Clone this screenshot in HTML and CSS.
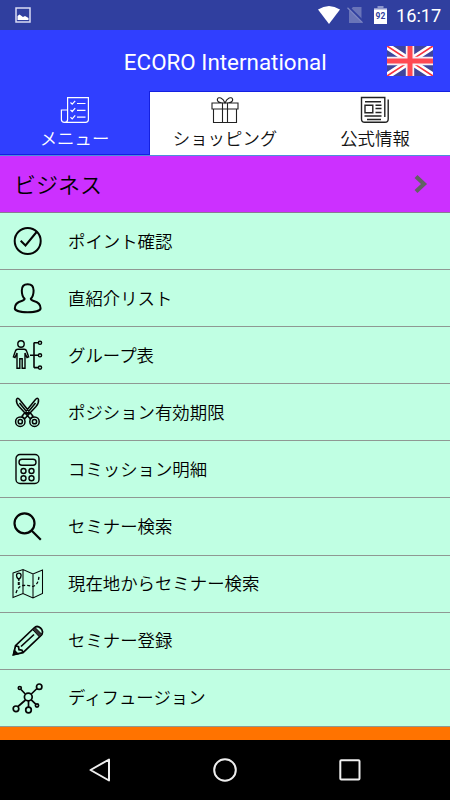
FILE: index.html
```html
<!DOCTYPE html>
<html lang="ja">
<head>
<meta charset="utf-8">
<meta name="viewport" content="width=device-width">
<title>ECORO International</title>
<link rel="stylesheet" href="styles.css">
</head>
<body>
<div class="status">
  <svg class="status-pic" width="16" height="16" viewBox="0 0 16 16"><rect x="1" y="1" width="14" height="14" fill="none" stroke="#d9dcf5" stroke-width="1.500"/><path d="M2.500 13V9L4.500 7.500 8 10l2-1 3.500 2v2z" fill="#fff"/></svg>
  <svg class="wifi" width="22" height="18" viewBox="0 0 22 18"><path d="M0 3.500Q11-3.500 22 3.500L11 18z" fill="#fff"/></svg>
  <svg class="nosim" width="17" height="18" viewBox="0 0 17 18"><path d="M6 1h8.500v16H2V5z" fill="#6974b8"/><path d="M1.500 1l15 15" stroke="#303f9f" stroke-width="2.400"/><path d="M.5 1.700l15 15" stroke="#7b85c2" stroke-width="1.300"/></svg>
  <svg class="battery" width="13" height="18" viewBox="0 0 13 18"><path d="M0 3h13v15H0z" fill="#fff"/><path d="M3.500 0h6v2h-6zM0 2h13v1.500H0z" fill="#8d96cc"/><text x="6.500" y="12.500" text-anchor="middle" class="batt-num">92</text></svg>
  <span class="clock">16:17</span>
</div>
<header class="header">
  <h1>ECORO International</h1>
  <svg class="flag" width="46" height="30" viewBox="0 0 46 30">
    <path fill="#3f459c" d="M0 0h46v30H0z"/>
    <path d="M0 0l46 30M46 0L0 30" stroke="#fff" stroke-width="6.500"/>
    <path d="M0 0l19 12.400M46 0L27 12.400M0 30l19-12.400M46 30L27 17.600" stroke="#f8343f" stroke-width="1.700"/>
    <path d="M23 0v30M0 15h46" stroke="#f7eef5" stroke-width="8.400"/>
    <path d="M23 0v30M0 15h46" stroke="#ff4852" stroke-width="5"/>
  </svg>
</header>
<nav class="tabs">
  <a class="tab active">
    <svg width="30" height="28" viewBox="0 0 30 28" fill="none" stroke="#fff" stroke-width="1.200"><path d="M7.600 23.500V1.600h20.800v22q0 2.800-3 2.800H4.500q-3.100 0-3.100-3V14h6.200v9.500q0 2.900-3 2.900"/><path d="M10.500 6.500l1.700 1.700 3-3.400m-4.700 9l1.700 1.700 3-3.400m-4.700 9l1.700 1.700 3-3.400M17 7.500h8.500M17 14.300h8.500M17 21.200h8.500"/></svg>
    <span>メニュー</span>
  </a>
  <a class="tab">
    <svg width="30" height="28" viewBox="0 0 30 28" fill="none" stroke="#222" stroke-width="1.100"><path d="M2 7h26v6H2zM3.500 13v13.500h23V13M12.500 7v19.500M17.500 7v19.500M14 7C10 7 6.500 5.500 7.500 3S13 1.700 15 7c2-5.300 6.500-6.500 7.500-4S20 7 16 7"/></svg>
    <span>ショッピング</span>
  </a>
  <a class="tab">
    <svg width="30" height="28" viewBox="0 0 30 28" fill="none" stroke="#222" stroke-width="1.400"><path d="M24.800 21V1.500H1.500V23q0 3.300 3.300 3.300H25q3.200 0 3.200-3.300V3.500"/><path d="M5 9.200h7.800v7.500H5zM5 5.700h16M15.500 9.200h6M15.500 12.500h6M15.500 16.500h6M4.500 20h17M7 23.500h14"/></svg>
    <span>公式情報</span>
  </a>
</nav>
<div class="section"><span>ビジネス</span><svg width="14" height="20" viewBox="0 0 14 20"><path d="M2 2.500L10 10 2 17.500" fill="none" stroke="#626262" stroke-width="4.200"/></svg></div>
<ul class="menu">
  <li><svg viewBox="0 0 32 32" stroke-width="2"><circle cx="15.700" cy="16" r="13"/><path d="M8.700 15.700l4.800 4.700L25 6.500"/></svg><span>ポイント確認</span></li>
  <li><svg viewBox="0 0 32 32" stroke-width="2"><path d="M12.600 16.800Q9.800 14 9.800 8.500 9.800 2.200 15.700 2.200t5.900 6.300q0 5.500-2.800 8.300c0 1.400 1.200 1.700 3 2.200 5.200 1.400 6.800 3.400 6.800 7.300 0 5.300-25.800 5.300-25.800 0 0-3.900 1.600-5.900 6.800-7.300 1.800-.5 3-.8 3-2.200z"/></svg><span>直紹介リスト</span></li>
  <li><svg viewBox="0 0 32 32" stroke-width="1.400"><circle cx="9" cy="5" r="3.200"/><path d="M5.800 10.200h6.400q1.900 0 2.500 2l1.900 5.600-1.600.7-2-4.500v15.300h-2.800v-9.500H7.800v9.500H5V14l-2 4.500-1.600-.7 1.900-5.600q.6-2 2.500-2z"/><path d="M18 16.300h8M22 3.600v25.200M22 3.800h4.500M22 28.600h4.500" stroke-width="1.600"/><circle cx="28" cy="3.800" r="1.600"/><circle cx="28" cy="16.300" r="1.600"/><circle cx="28" cy="28.600" r="1.600"/></svg><span>グループ表</span></li>
  <li><svg viewBox="0 0 32 32" stroke-width="1.500"><circle cx="8.300" cy="25.700" r="4.700"/><circle cx="8.300" cy="25.700" r="2.100"/><circle cx="22.500" cy="25.700" r="4.700"/><circle cx="22.500" cy="25.700" r="2.100"/><path d="M12.500 22.500l-2.500-2.300L23.500 3.500q2-2.500 3 0 .5 3.500-2.500 7L12.500 23M18.500 22.500l2.500-2.300L7.500 3.500q-2-2.500-3 0-.5 3.500 2.500 7L18.500 23M7.500 7l9 11M23.500 7l-9 11"/></svg><span>ポジション有効期限</span></li>
  <li><svg viewBox="0 0 32 32" stroke-width="1.400"><rect x="4" y="1.500" width="23" height="29" rx="4"/><rect x="7" y="6.300" width="17" height="6" rx="3"/><circle cx="11.500" cy="18" r="2.500"/><circle cx="19.500" cy="18" r="2.500"/><circle cx="11.500" cy="25.200" r="2.500"/><circle cx="19.500" cy="25.200" r="2.500"/></svg><span>コミッション明細</span></li>
  <li><svg viewBox="0 0 32 32" stroke-width="2.200"><circle cx="12.500" cy="12.300" r="10"/><path d="M19.500 19.500L28.800 28.700"/></svg><span>セミナー検索</span></li>
  <li><svg viewBox="0 0 32 32" stroke-width="1.050"><path d="M1 5l10-3.500 10 4.500L30.500 2v23.500L21 30l-10-4.500L1 29.500zM11 1.500v24M21 6v24"/><path d="M6.800 11.500Q4.300 9 4.500 7.500a2.300 2.300 0 0 1 4.600 0Q9.300 9 6.800 11.500v1.500M5.800 14.500l2 2m0-2l-2 2" stroke-width="1.300"/><path d="M4 25q2-7 7-7.500t10 1q6-2 6-12" stroke-dasharray="3 2" stroke-width="1.300"/></svg><span>現在地からセミナー検索</span></li>
  <li><svg viewBox="0 0 32 32" stroke-width="1.700"><path d="M1.500 29.700L3.500 20.700 22 3q3-3 6.500 0t1 7L11 27.700zM3.500 20.700l3 1 .5 3 3 .5 1 2.500M9 21.500L22 9.500"/><path d="M20.500 4.500L23 2.500l7 7-2.500 2.500z" fill="#333" stroke-width="1"/><path d="M1.500 29.700l1-4 3 3z" fill="#111"/></svg><span>セミナー登録</span></li>
  <li><svg viewBox="0 0 32 32" stroke-width="1.700"><circle cx="16.300" cy="15" r="3.900"/><circle cx="7.800" cy="6" r="1.500"/><circle cx="27.200" cy="4.700" r="2.700"/><circle cx="4" cy="26.800" r="2.800"/><circle cx="16.500" cy="28" r="2.800"/><circle cx="25" cy="23.500" r="1.600"/><path d="M9 7.500l4.300 4.500M25 6.500L19.300 12M6 24.500l7.500-6.500M16.500 19v6M19.300 17.800l4.400 4.400"/></svg><span>ディフュージョン</span></li>
</ul>
<div class="next"></div>
<footer class="navbar">
  <svg viewBox="0 0 26 26"><path d="M22 2.500v21L3.500 13z"/></svg>
  <svg viewBox="0 0 26 26"><circle cx="13" cy="13" r="10.800"/></svg>
  <svg viewBox="0 0 26 26"><rect x="3.300" y="3.300" width="19.200" height="19.200" rx="1"/></svg>
</footer>
</body>
</html>
```
FILE: styles.css
```css
* { box-sizing: border-box; }
body {
  margin: 0;
  width: 450px;
  height: 800px;
  overflow: hidden;
  display: flex;
  flex-direction: column;
  font-family: Roboto, "Noto Sans CJK JP", sans-serif;
  color: #000;
}
body > * { flex-shrink: 0; }
svg { display: block; }

.status {
  height: 30px;
  background: #303f9f;
  color: #fff;
  display: flex;
  align-items: center;
  padding: 0 10px 0 15px;
}
.wifi { margin-left: auto; }
.nosim { margin-left: 7px; }
.battery { margin-left: 10px; }
.batt-num { font: bold 8.5px Roboto, sans-serif; fill: #303f9f; }
.clock { margin-left: 9px; width: 44px; padding-top: 1px; font-size: 18.2px; line-height: 30px; white-space: nowrap; }

.header {
  height: 62px;
  background: #303fff;
  border-bottom: 1px solid #1420e0;
  display: grid;
  grid-template-columns: 1fr 46px;
  align-items: center;
  padding: 1px 17.5px 0 64px;
}
.header h1 {
  margin: 0;
  padding-top: 2px;
  text-align: center;
  font-size: 22.4px;
  line-height: 30px;
  font-weight: 400;
  color: #fff;
}

.tabs {
  height: 64px;
  display: grid;
  grid-template-columns: repeat(3, 1fr);
  border-bottom: 1px solid #4c8fd8;
}
.tab {
  display: flex;
  flex-direction: column;
  align-items: center;
  padding-top: 4px;
  background: #fff;
  color: #111;
  font-size: 17.4px;
  line-height: 26px;
  font-weight: 350;
}
.tab span { margin-top: 2px; }
.tab.active {
  background: #303fff;
  color: #fff;
  border-right: 1px solid #1420e0;
  border-bottom: 1px solid #1420e0;
  margin-top: -1px;
  padding-top: 5px;
}

.section {
  height: 57px;
  background: #cc30ff;
  border-bottom: 1px solid #8a7a92;
  display: flex;
  align-items: center;
  justify-content: space-between;
  padding: 0 22px 0 14px;
  font-size: 22px;
  font-weight: 350;
}
.section span { padding-bottom: 2px; }

.menu { list-style: none; margin: 0; padding: 0; }
.menu li {
  height: 57.1px;
  display: flex;
  align-items: center;
  gap: 24px;
  padding-left: 12px;
  background: #c0ffe3;
  border-bottom: 1px solid #8f9893;
  font-size: 17.4px;
  font-weight: 350;
}
.menu span { padding-bottom: 2px; }
.menu svg {
  width: 32px;
  height: 32px;
  fill: none;
  stroke: #050505;
}

.next { height: 13px; background: #ff7300; }

.navbar {
  height: 60px;
  background: #000;
  display: grid;
  grid-template-columns: repeat(3, 125px);
  justify-content: center;
  align-items: center;
  justify-items: center;
}
.navbar svg {
  width: 26px;
  height: 26px;
  fill: none;
  stroke: #eee;
  stroke-width: 2;
  stroke-linejoin: round;
}
```
